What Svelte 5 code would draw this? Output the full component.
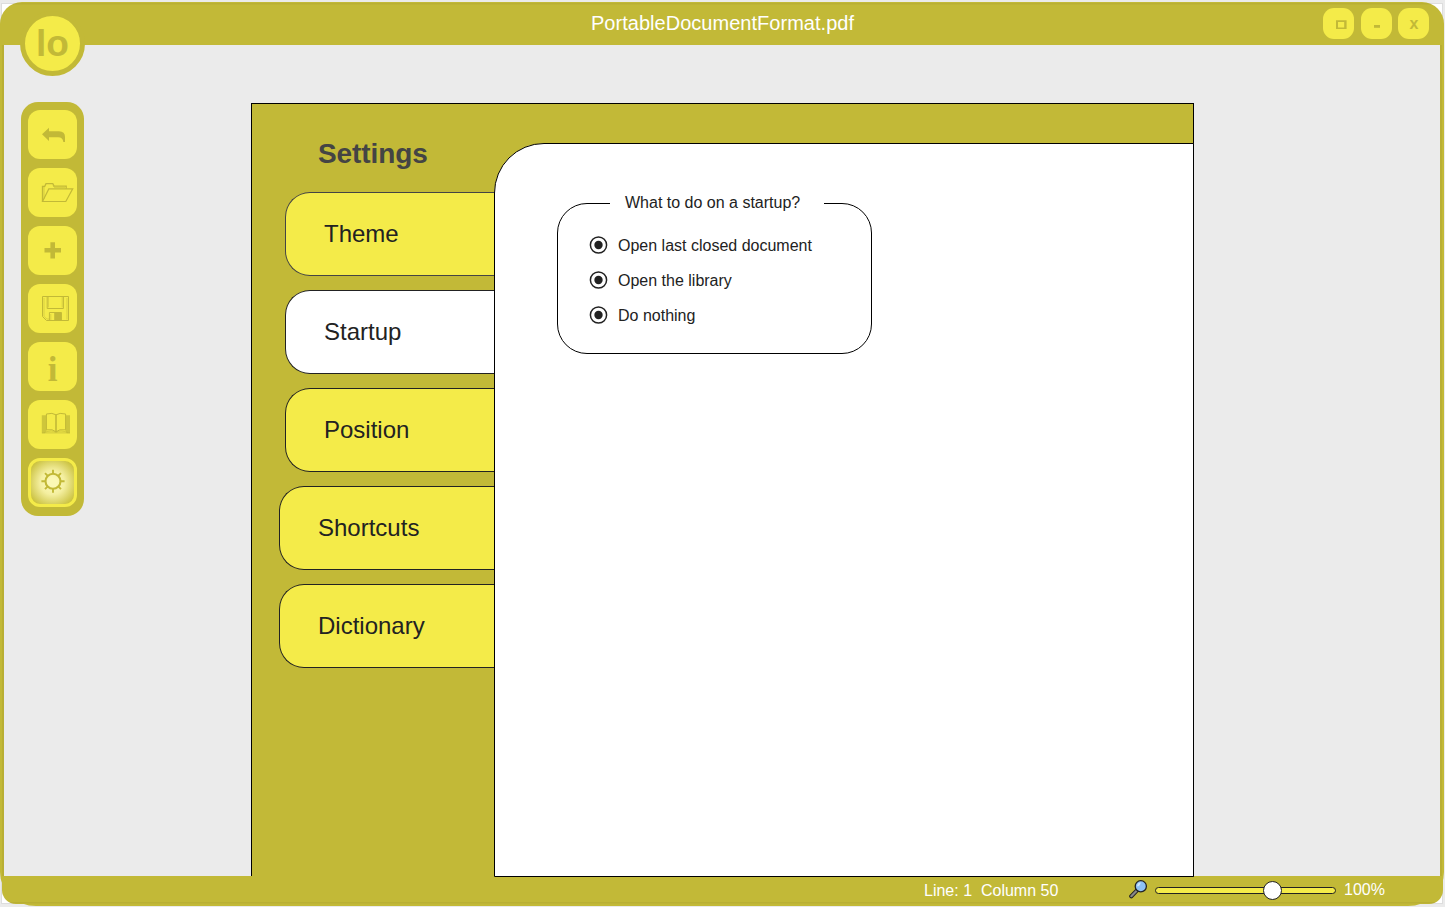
<script>
  const tools = ['undo', 'open', 'add', 'save', 'info', 'library', 'settings'];
  const tabs = [
    { name: 'Theme', kind: 'soft' },
    { name: 'Startup', kind: 'active' },
    { name: 'Position', kind: '' },
    { name: 'Shortcuts', kind: 'wide' },
    { name: 'Dictionary', kind: 'wide' }
  ];
  const options = ['Open last closed document', 'Open the library', 'Do nothing'];
</script>

<div class="screen">
  <div class="backing"></div>
  <div class="window">
    <header>
      <h1>PortableDocumentFormat.pdf</h1>
      <div class="controls">
        <button aria-label="Maximize"><svg width="31" height="31"><path d="M13 12.2h10.6V21H13zM15 14v5.6h6.2V14z" fill="#c2b937" fill-rule="evenodd" /></svg></button>
        <button aria-label="Minimize"><svg width="31" height="31"><path d="M13 17h6v2.8h-6z" fill="#c2b937" /></svg></button>
        <button class="close">x</button>
      </div>
    </header>

    <main>
      <nav class="toolbar">
        {#each tools as tool}
          <button class:lit={tool === 'settings'} aria-label={tool}>
            {#if tool === 'info'}
              <span class="info">i</span>
            {:else}
              <svg width="49" height="49" viewBox="0 0 49 49" fill="none" stroke="#c2b937" stroke-width="1">
                {#if tool === 'undo'}
                  <path stroke="none" fill="#c2b937" d="M14 24.3 21 17.7V21.3H31Q37 21.5 37 27V32H35.3Q35 27.4 30 27.2H21V31z" />
                {:else if tool === 'open'}
                  <path stroke-width="1.3" d="M14.5 33.5V18.5H16.6L18 15.7H24.8L26.2 18.2H38.2V20.8" />
                  <path stroke-width="1" d="M16 31V19.5M25 17.6L26.5 19.6H37" opacity=".6" />
                  <path stroke-width="1.2" d="M14.5 33.5L20.8 20.9H44.7L37.8 33.5Z" />
                {:else if tool === 'add'}
                  <path stroke-width="4.6" d="M16.5 24.3H33M24.7 16.2V32.4" />
                {:else if tool === 'save'}
                  <path d="M14.5 12.5H40.5V36.5H18.5L14.5 32.5ZM19.2 13V24.5H35.4V13M21.4 36V28.5H33.4V36" />
                  <path opacity=".5" d="M16 14V32.2L18.8 35H21M39 14V35.5M20.5 13V23.3M34.2 13V23.3M22.8 36V30" />
                  <path stroke="none" fill="#c2b937" d="M26.2 28.5H33.4V36H26.2z" />
                {:else if tool === 'library'}
                  <path stroke="none" fill="#c2b937" opacity=".75" d="M13.8 15.2H18.8V30L16.8 33.2H13.8ZM37.2 15.2H42V33.2H38.8L37.2 30Z" />
                  <path fill="#f4eb49" d="M18.4 29.8V14Q24.5 12.4 28 14.8Q31.5 12.4 37.6 14V29.8Q31 28.8 28 31.8Q25 28.8 18.4 29.8Z" />
                  <path stroke-width="1.6" d="M28 14.8V31.6" />
                  <path opacity=".7" d="M16.2 32.4Q24 29.6 28 32.4Q32 29.6 39.8 32.4M14 32.9H42" />
                {:else}
                  <circle cx="25" cy="23.2" r="7.5" stroke-width="2.1" />
                  <path stroke-width="1.9" d="M25 11.7V16M25 30.5V34.8M13.4 23.2H18M32 23.2H36.6M17 15.2L20 18.2M30 28.2L33 31.2M17 31.2L20 28.2M30 18.2L33 15.2" />
                {/if}
              </svg>
            {/if}
          </button>
        {/each}
      </nav>

      <section class="panel">
        <aside>
          <h2>Settings</h2>
          {#each tabs as tab}
            <button class="tab {tab.kind}">{tab.name}</button>
          {/each}
        </aside>
        <div class="content">
          <div class="group">
            <div class="legend"><span>What to do on a startup?</span></div>
            {#each options as option}
              <div class="option">
                <svg width="19" height="19"><circle cx="9.5" cy="9" r="8.1" fill="#fff" stroke="#222" stroke-width="1.5" /><circle cx="9.5" cy="9" r="4.2" fill="#222" /></svg>
                <span>{option}</span>
              </div>
            {/each}
          </div>
        </div>
      </section>
    </main>

    <footer>
      <span class="position">Line: 1&nbsp; Column 50</span>
      <svg class="lens" width="20" height="20" viewBox="0 0 20 20">
        <path d="M3.3 17.2L9 11.4" stroke="#222" stroke-width="4.2" stroke-linecap="round" />
        <path d="M3.3 17.2L8.4 12" stroke="#888" stroke-width="2.2" stroke-linecap="round" />
        <circle cx="12.8" cy="7.3" r="5.6" fill="#8dc1f5" stroke="#222" stroke-width="1.3" />
        <path d="M9 7.2Q11.5 7.8 12.8 3.4Q9.3 3.7 9 7.2Z" fill="#cde5ff" />
      </svg>
      <div class="slider"><i></i></div>
      <span class="zoom">100%</span>
    </footer>
  </div>
  <div class="logo"><span>lo</span></div>
</div>

<style>
  :global(body) { margin: 0; background: #ebebeb; }
  * { box-sizing: border-box; }
  .screen {
    position: relative;
    width: 1445px;
    height: 907px;
    padding: 2px 1px 1px 0;
    overflow: hidden;
    font-family: "Liberation Sans", Arial, sans-serif;
    color: #222;
  }
  .backing {
    position: absolute;
    inset: 3px 2px 3px 1px;
    background: #fff;
    border: 1px solid #ddd;
  }
  .window {
    position: relative;
    height: 904px;
    display: flex;
    flex-direction: column;
    background: linear-gradient(#b9af34, #b9af34) 0 1px / 100% 1.5px no-repeat, #c2b937;
    border-radius: 22px 22px 36px 36px / 22px 22px 34px 34px;
  }
  h1, h2 { margin: 0; }
  button { font: inherit; color: inherit; border: 0; padding: 0; margin: 0; background: #f4eb49; }
  button svg { display: block; }
  header {
    height: 43px;
    flex: none;
    display: grid;
    grid-template-columns: 1fr auto 1fr;
    padding: 6px 15px 0 0;
  }
  h1 {
    grid-column: 2;
    font-size: 20px;
    font-weight: 400;
    line-height: 30px;
    letter-spacing: 0.03px;
    color: #fff;
    transform: translateX(8px);
  }
  .controls { display: flex; justify-content: flex-end; gap: 6.5px; }
  .controls button { width: 31px; height: 31px; border-radius: 11px; }
  .controls .close { font-size: 16px; font-weight: 700; line-height: 29px; color: #c2b937; padding-left: 1px; }
  main {
    flex: none;
    height: 831px;
    margin: 0 4px;
    background: #ebebeb;
    display: flex;
    align-items: flex-start;
    box-shadow: -2px 0 #b9af34, 2px 0 #b9af34;
  }
  .toolbar {
    width: 63px;
    height: 414px;
    margin: 57px 0 0 17px;
    padding: 8px 7px 0;
    display: flex;
    flex-direction: column;
    gap: 9px;
    background: #c2b937;
    border-radius: 17px;
  }
  .toolbar button { width: 49px; height: 49px; border-radius: 12px; flex: none; }
  .toolbar .lit {
    border: 3px solid #f4eb49;
    background: radial-gradient(circle, #fbf8b5 15%, #f4efa0 40%, #c9c03c 88%);
  }
  .lit svg { margin: -3px; }
  .info { display: block; font: 700 35px/49px "Liberation Serif", serif; color: #c2b937; padding-top: 3px; height: 49px; }
  .panel {
    width: 943px;
    height: 774px;
    margin: 58px 0 0 167px;
    display: flex;
    background: #c2b937;
    border: 1px solid #000;
    border-bottom: 0;
    flex: none;
    position: relative;
    z-index: 2;
    clip-path: polygon(0 0, 100% 0, 100% 100%, 243px 100%, 243px 773px, 0 773px);
  }
  aside {
    width: 242px;
    display: flex;
    flex-direction: column;
    align-items: flex-end;
    gap: 14px;
  }
  h2 {
    align-self: flex-start;
    height: 74px;
    padding: 34px 0 0 66px;
    font-size: 28px;
    line-height: 32px;
    letter-spacing: -0.08px;
    color: #444;
  }
  .tab {
    width: 209px;
    height: 84px;
    flex: none;
    border: 1px solid #222;
    border-right: 0;
    border-radius: 25px 0 0 25px;
    padding-left: 38px;
    text-align: left;
    font-size: 24px;
  }
  .tab.wide { width: 215px; }
  .tab.soft { border-color: #444; }
  .tab.active { background: #fff; }
  .content {
    width: 700px;
    height: 734px;
    margin: 39px -1px 0 0;
    flex: none;
    border: 1px solid #000;
    border-radius: 50px 0 0 0;
    background: #fff;
    padding: 59px 0 0 62px;
  }
  .group {
    width: 315px;
    height: 151px;
    border: 1px solid #000;
    border-radius: 30px;
    padding-left: 30px;
    font-size: 16px;
  }
  .legend {
    width: 214px;
    height: 20px;
    margin: -11px 0 15px 22px;
    padding-left: 15px;
    line-height: 20px;
    background: #fff;
  }
  .option { height: 35px; display: flex; align-items: center; gap: 10px; }
  .option svg { margin-left: 1px; }
  .option span, .legend span { white-space: nowrap; }
  footer {
    height: 28px;
    margin: 0 1px 0 2px;
    flex: none;
    display: flex;
    align-items: center;
    padding: 0 0 0 922px;
    color: #fff;
    font-size: 16px;
    border-radius: 0 0 14px 14px;
    background: linear-gradient(#b9af34, #b9af34) 0 26px / 100% 1.5px no-repeat, #c2b937;
  }
  .position { width: 204px; white-space: nowrap; padding-top: 1px; }
  .lens { flex: none; margin-top: -2px; }
  .slider {
    width: 181px;
    height: 7px;
    margin: 0 8px 0 7px;
    flex: none;
    border: 1px solid #222;
    border-radius: 4px;
    background: #f4eb49;
    position: relative;
  }
  .slider i {
    position: absolute;
    left: 107px;
    top: -7px;
    width: 19px;
    height: 19px;
    border-radius: 50%;
    background: #fff;
    border: 1px solid #222;
  }
  .zoom { margin-top: -1px; }
  .logo {
    position: absolute;
    left: 20px;
    top: 11px;
    width: 65px;
    height: 65px;
    border: 5px solid #c2b937;
    border-radius: 50%;
    background: #f4eb49;
    display: grid;
    place-items: center;
    font-size: 37px;
    font-weight: 700;
    line-height: 40px;
    color: #c2b937;
  }
</style>
